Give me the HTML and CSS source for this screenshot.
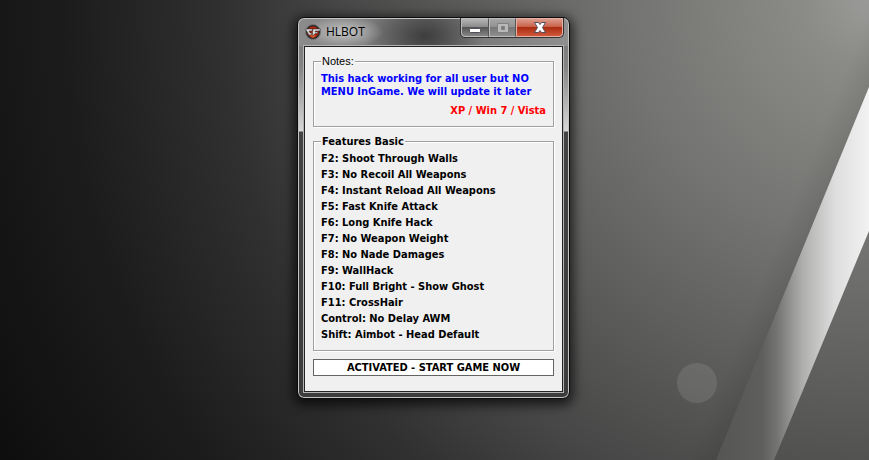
FILE: index.html
```html
<!DOCTYPE html>
<html lang="en">
<head>
  <meta charset="UTF-8">
  <meta name="viewport" content="width=device-width, initial-scale=1.0">
  <title>HLBOT</title>
  <link rel="stylesheet" href="styles.css">
</head>
<body>
  <svg class="wallpaper" viewBox="0 0 869 460" preserveAspectRatio="xMaxYMin slice" aria-hidden="true">
    <defs>
      <radialGradient id="light" gradientUnits="userSpaceOnUse" cx="869" cy="0" r="980">
        <stop offset="0" stop-color="#9a9a98"/>
        <stop offset="0.07" stop-color="#8a8a87"/>
        <stop offset="0.25" stop-color="#737371"/>
        <stop offset="0.41" stop-color="#5b5b59"/>
        <stop offset="0.54" stop-color="#474747"/>
        <stop offset="0.66" stop-color="#303030"/>
        <stop offset="0.82" stop-color="#1c1c1c"/>
        <stop offset="1" stop-color="#0e0e0e"/>
      </radialGradient>
      <linearGradient id="beam" gradientUnits="userSpaceOnUse" x1="716" y1="0" x2="869" y2="0">
        <stop offset="0" stop-color="#555553"/>
        <stop offset="0.3" stop-color="#5e5e5c"/>
        <stop offset="0.4" stop-color="#747472"/>
        <stop offset="0.57" stop-color="#b0b0af"/>
        <stop offset="0.78" stop-color="#dedede"/>
        <stop offset="1" stop-color="#f2f2f2"/>
      </linearGradient>
      <linearGradient id="shade" gradientUnits="userSpaceOnUse" x1="768" y1="262" x2="800" y2="275">
        <stop offset="0" stop-color="#000" stop-opacity="0"/>
        <stop offset="1" stop-color="#000" stop-opacity="0.1"/>
      </linearGradient>
    </defs>
    <rect width="869" height="460" fill="url(#light)"/>
    <path d="M869 -40 L869 87 L716 460 L664 460 Z" fill="url(#shade)"/>
    <path d="M869 87 L869 231 L774 460 L716 460 Z" fill="url(#beam)"/>
    <circle cx="697" cy="383" r="20" fill="#fff" fill-opacity="0.1"/>
  </svg>

  <main class="window">
    <header class="titlebar">
      <svg class="app-icon" viewBox="0 0 16 16" aria-hidden="true">
        <circle cx="8" cy="8" r="7.500" fill="#2a2a2a" stroke="#777"/>
        <circle cx="8" cy="8" r="5.800" fill="#a3240f"/>
        <path d="M5 12 L8 9.500 L11 12 L8 14 Z" fill="#d4522c"/>
        <path d="M0.500 5 H7.500 L7 7 H4 L5 9 H7 L6 11 H4 Z" fill="#ddd" stroke="#333" stroke-width="0.500"/>
        <path d="M8 5 H15.500 L14.500 7 H10.500 L10 8 H13 L12 9.500 H10 L8 12 L7.500 9 Z" fill="#ddd" stroke="#333" stroke-width="0.500"/>
      </svg>
      <h1 class="title">HLBOT</h1>
      <div class="caption">
        <button class="caption-btn minimize" type="button" aria-label="Minimize">
          <svg width="12" height="5" viewBox="0 0 12 5"><rect x="0.500" y="0.500" width="11" height="4" rx="1" fill="#fff" stroke="#50505c"/></svg>
        </button>
        <button class="caption-btn maximize" type="button" aria-label="Maximize" disabled>
          <svg width="12" height="10" viewBox="0 0 12 10"><path d="M0.500 0.500 H11.500 V9.500 H0.500 Z M4.500 3.500 V6.500 H7.500 V3.500 Z" fill="#b8b8b8" fill-rule="evenodd" stroke="#808080"/></svg>
        </button>
        <button class="caption-btn close" type="button" aria-label="Close">
          <svg width="12" height="11" viewBox="0 0 12 11"><path d="M0.500 0.500 H4.500 L6 2.500 L7.500 0.500 H11.500 L8.500 5.500 L11.500 10.500 H7.500 L6 8.500 L4.500 10.500 H0.500 L3.500 5.500 Z" fill="#fff" stroke="#50505c"/></svg>
        </button>
      </div>
    </header>

    <form class="client">
      <fieldset class="group notes">
        <legend class="legend-plain">Notes:</legend>
        <p class="message">This hack working for all user but NO MENU InGame. We will update it later</p>
        <p class="systems">XP / Win 7 / Vista</p>
      </fieldset>

      <fieldset class="group">
        <legend>Features Basic</legend>
        <ul class="features">
          <li>F2: Shoot Through Walls</li>
          <li>F3: No Recoil All Weapons</li>
          <li>F4: Instant Reload All Weapons</li>
          <li>F5: Fast Knife Attack</li>
          <li>F6: Long Knife Hack</li>
          <li>F7: No Weapon Weight</li>
          <li>F8: No Nade Damages</li>
          <li>F9: WallHack</li>
          <li>F10: Full Bright - Show Ghost</li>
          <li>F11: CrossHair</li>
          <li>Control: No Delay AWM</li>
          <li>Shift: Aimbot - Head Default</li>
        </ul>
      </fieldset>

      <input class="status" type="text" value="ACTIVATED - START GAME NOW" aria-label="Status" readonly>
    </form>
  </main>
</body>
</html>
```

FILE: styles.css
```css
* {
  box-sizing: border-box;
}

body {
  margin: 0;
  min-height: 100vh;
  padding: 17px 2px 17px 0;
  background: #1c1c1c;
  color: #000;
  font: bold 11px/13px Tahoma, "DejaVu Sans Condensed", sans-serif;
}

.wallpaper {
  position: absolute;
  top: 0;
  left: 0;
  width: 100%;
  height: 100%;
  z-index: -1;
}

.window {
  width: 273px;
  margin: 0 auto;
  padding: 0 5px 5px;
  border: 1px solid #0c0c0c;
  border-radius: 7px;
  background:
    radial-gradient(ellipse 40px 16px at 46px 14px, rgba(225, 225, 225, 0.7), transparent) no-repeat 0 0 / 100% 28px,
    radial-gradient(ellipse 60px 36px at 126px 18px, rgba(40, 40, 40, 0.7), transparent) no-repeat 0 0 / 100% 28px,
    linear-gradient(90deg, #8c8c8c, #6f6f6f 50%, #909090) no-repeat 0 0 / 100% 28px,
    linear-gradient(#747474, #858585 50px, #d8d8d8 113px, #444 114px, #3c3c3c);
  box-shadow: inset 0 0 0 1px #c4c4c4, 0 3px 12px 3px rgba(0, 0, 0, 0.7);
}

.titlebar {
  display: flex;
  align-items: flex-start;
  height: 28px;
}

.app-icon {
  width: 16px;
  height: 16px;
  margin: 6px 5px 0 2px;
}

.title {
  margin: 6px auto 0 0;
  font: 12px/16px "Segoe UI", "Open Sans", sans-serif;
}

.caption {
  display: flex;
  border: 1px solid #333;
  border-top: 0;
  border-radius: 0 0 5px 5px;
  overflow: hidden;
}

.caption-btn {
  display: flex;
  justify-content: center;
  align-items: center;
  width: 28px;
  height: 19px;
  padding: 0;
  border: 1px solid #bbb;
  border-right-color: #555;
  background: linear-gradient(#b5b5b5, #8c8c8c 45%, #555 50%, #858585);
}

.minimize {
  padding-top: 5px;
  border-radius: 0 0 0 4px;
}

.maximize {
  width: 27px;
  background: linear-gradient(#a5a5a5, #929292 45%, #777 50%, #8d8d8d);
}

.close {
  width: 47px;
  border-color: #e6b0a4;
  border-radius: 0 0 4px 0;
  background: linear-gradient(#dc9c8c, #c9634c 45%, #ab2c10 50%, #d0583a);
}

.client {
  margin: 0 1px 1px;
  padding: 8px 8px 15px;
  border: 1px solid #222;
  outline: 1px solid #b4b4b4;
  background: #f0f0f0;
}

.group {
  min-width: 0;
  margin: 0 0 8px;
  padding: 3px 7px 7px;
  border: 1px solid #a0a0a0;
  box-shadow: 1px 1px #fff, inset 1px 1px #fff;
}

.notes {
  padding: 4px 7px 9px;
}

legend {
  padding: 0 1px;
  background: #f0f0f0;
}

.legend-plain {
  font-family: "Liberation Sans", Arial, sans-serif;
  font-weight: normal;
}

.message {
  margin: 0 0 6px;
  color: #00f;
}

.systems {
  margin: 0;
  color: #f00;
  text-align: right;
}

.features {
  margin: 0;
  padding: 0;
  list-style: none;
  line-height: 16px;
}

.status {
  display: block;
  width: 100%;
  height: 17px;
  padding: 0;
  border: 1px solid #646464;
  background: #fff;
  color: #000;
  font: inherit;
  text-align: center;
}
```
